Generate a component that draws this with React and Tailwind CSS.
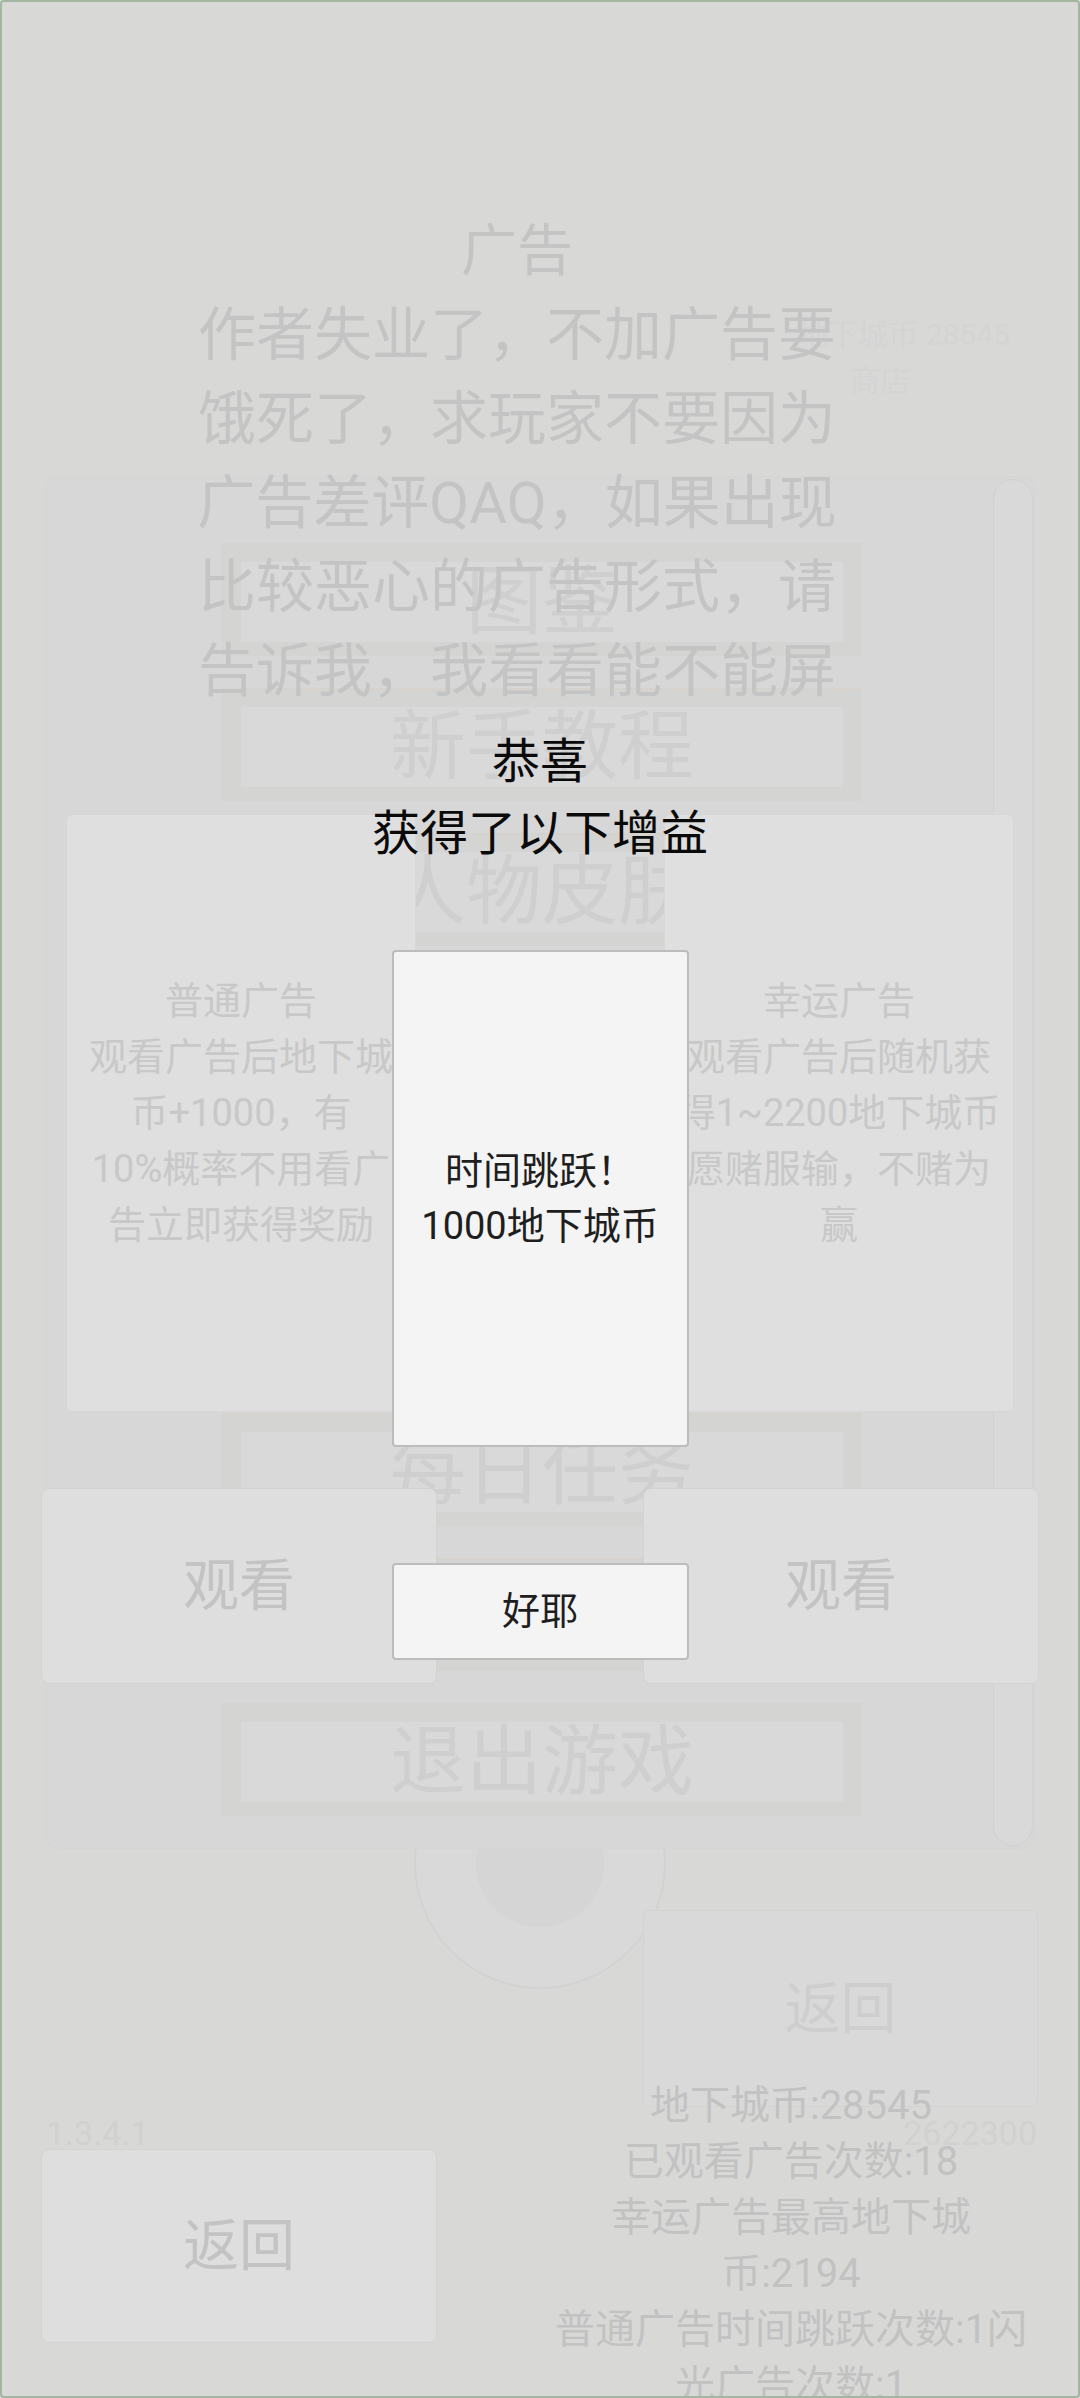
import React from "react";

// 主菜单按钮（被广告页遮住的那些没有文字）
const MENU_ITEMS = ["图鉴", "新手教程", "人物皮肤", "", "", "", "每日任务", "", "退出游戏"];

const AD_LINES = [
  "作者失业了，不加广告要",
  "饿死了，求玩家不要因为",
  "广告差评QAQ，如果出现",
  "比较恶心的广告形式，请",
  "告诉我，我看看能不能屏",
];

const NORMAL_AD = ["普通广告", "观看广告后地下城", "币+1000，有", "10%概率不用看广", "告立即获得奖励"];
const LUCKY_AD = ["幸运广告", "观看广告后随机获", "得1~2200地下城币", "愿赌服输，不赌为", "赢"];

const STATS = [
  "地下城币:28545",
  "已观看广告次数:18",
  "幸运广告最高地下城",
  "币:2194",
  "普通广告时间跳跃次数:1闪",
  "光广告次数:1",
];

function MenuButton({ label }) {
  return (
    <div className="flex h-[113px] w-[640px] shrink-0 flex-col border-t-2 border-[#d6d2cd] bg-[#d4d4d2] px-[18px] pt-[16px] pb-[13px]">
      <div className="flex flex-1 items-center justify-center border border-[#d4d4d4] bg-[#d9d9d9] text-[76px] leading-none text-[#cfcfcf]">
        {label}
      </div>
    </div>
  );
}

function MainMenu() {
  return (
    <div className="absolute inset-0 z-0 isolate flex flex-col">
      <div className="mt-[312px] flex shrink-0 flex-col items-end pr-[70px] text-[30px] leading-[46px] text-[#d4d4d4]">
        <div>地下城币 28545</div>
        <div className="pr-[100px]">商店</div>
      </div>

      <div className="relative z-10 ml-[45px] mt-[72px] flex h-[1373px] w-[990px] shrink-0 rounded-[14px] border border-[#d5d5d5] bg-[#d7d7d7]">
        <div className="flex flex-1 flex-col gap-[32px] pl-[176px] pt-[66px]">
          {MENU_ITEMS.map((label, i) => (
            <MenuButton key={i} label={label} />
          ))}
        </div>
        <div className="my-[2px] mr-[1px] w-[40px] rounded-[20px] border border-[#d1d1d1] bg-[#d9d9d9]" />
      </div>

      <div className="-mt-[112px] flex shrink-0 justify-center">
        <div className="flex h-[252px] w-[252px] items-center justify-center rounded-full border-2 border-[#d2d2d2] bg-[#d9d9d9]">
          <div className="h-[128px] w-[128px] rounded-full bg-[#d5d5d5]" />
        </div>
      </div>

      <div className="mt-[124px] flex shrink-0 justify-between pl-[46px] pr-[43px] text-[34px] leading-[40px] text-[#d1d1d1]">
        <span>1.3.4.1</span>
        <span>2622300</span>
      </div>
    </div>
  );
}

function AdCard({ lines }) {
  return (
    <div className="flex h-[598px] w-[350px] flex-col items-center justify-center rounded-[6px] border border-[#d7d7d7] bg-[#dfdfdf] text-[38px] leading-[56px] text-[#c8c8c8]">
      {lines.map((l, i) => (
        <div key={i} className="whitespace-nowrap">
          {l}
        </div>
      ))}
    </div>
  );
}

function GrayButton({ label, faint }) {
  return (
    <div
      className={
        faint
          ? "flex h-[197px] w-[395px] items-center justify-center rounded-[6px] border border-[#d3d3d3] bg-[#d9d9d9] text-[56px] text-[#cecece]"
          : "flex h-[196px] w-[396px] items-center justify-center rounded-[8px] border border-[#d3d3d3] bg-[#dedede] text-[56px] text-[#c3c3c3]"
      }
    >
      {label}
    </div>
  );
}

function AdPage() {
  return (
    <div className="absolute inset-0 z-10 flex flex-col">
      <div className="ml-[190px] mt-[209px] h-[504px] w-[654px] shrink-0 text-center text-[#c4c4c4]">
        <div className="text-[56px] leading-[84px]">广告</div>
        {AD_LINES.map((l, i) => (
          <div key={i} className="whitespace-nowrap text-[58px] leading-[84px]">
            {l}
          </div>
        ))}
      </div>

      <div className="mt-[101px] flex shrink-0 justify-between px-[66px]">
        <AdCard lines={NORMAL_AD} />
        <AdCard lines={LUCKY_AD} />
      </div>

      <div className="mt-[76px] flex shrink-0 justify-between px-[41px]">
        <GrayButton label="观看" />
        <GrayButton label="观看" />
      </div>

      <div className="mt-[226px] flex shrink-0 justify-end pr-[42px]">
        <GrayButton label="返回" faint />
      </div>

      <div className="-mt-[29px] flex shrink-0 items-start pl-[41px] pr-[44px]">
        <div className="pt-[71px]">
          <div className="flex h-[194px] w-[396px] items-center justify-center rounded-[8px] border border-[#d3d3d3] bg-[#dedede] text-[56px] text-[#c3c3c3]">
            返回
          </div>
        </div>
        <div className="ml-auto w-[490px] text-center text-[40px] leading-[56px] text-[#c2c2c2]">
          {STATS.map((s, i) => (
            <div key={i} className="whitespace-nowrap">
              {s}
            </div>
          ))}
        </div>
      </div>
    </div>
  );
}

function RewardDialog() {
  return (
    <div className="absolute inset-0 z-20 flex flex-col items-center pt-[726px]">
      <div className="text-center text-[48px] leading-[72px] text-[#0a0a0a]">
        <div>恭喜</div>
        <div>获得了以下增益</div>
      </div>
      <div className="mt-[80px] flex h-[497px] w-[297px] shrink-0 flex-col items-center justify-center rounded-[4px] border-2 border-[#bcbcbc] bg-[#f4f4f4] text-[38px] leading-[55px] text-[#1e1e1e]">
        <div>时间跳跃！</div>
        <div>1000地下城币</div>
      </div>
      <div className="mt-[116px] flex h-[97px] w-[297px] shrink-0 items-center justify-center rounded-[4px] border-2 border-[#bcbcbc] bg-[#f4f4f4] text-[38px] text-[#1e1e1e]">
        好耶
      </div>
    </div>
  );
}

export default function App() {
  return (
    <div className="relative h-[2398px] w-[1080px] overflow-hidden bg-[#d8d9d7] font-['Roboto','Noto_Sans_CJK_SC',sans-serif]">
      <MainMenu />
      <AdPage />
      <RewardDialog />
      <div className="pointer-events-none absolute inset-0 z-30 rounded-[4px] border-2 border-[#a3b6a1]" />
    </div>
  );
}
